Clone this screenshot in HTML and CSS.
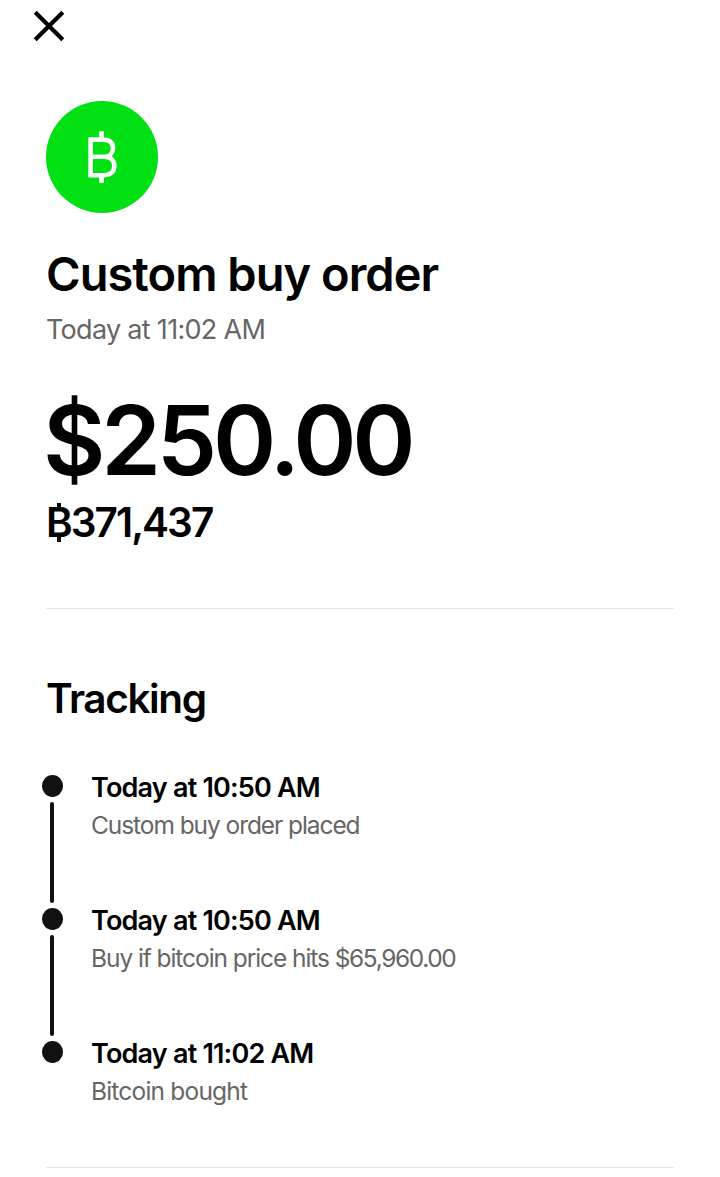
FILE: index.html
```html
<!DOCTYPE html>
<html lang="en">
<head>
    <meta charset="UTF-8">
    <meta name="viewport" content="width=device-width, initial-scale=1.0">
    <title>Custom buy order</title>
    <link rel="stylesheet" href="styles.css">
</head>
<body>
    <header class="topbar">
        <svg class="close" viewBox="0 0 32 32" width="32" height="32">
            <path d="M2.2 2.2L29.8 29.8M29.8 2.2L2.2 29.8" fill="none" stroke="#000" stroke-width="4.2"/>
        </svg>
    </header>
    <main class="order">
        <div class="avatar">
            <svg viewBox="0 0 112 112" width="112" height="112">
                <path d="M44.6 76.6V36.3M44.6 38.6H57.5C64 38.6 67 42.2 67 46.9C67 51.8 64 55.8 58 55.8H44.6M58 55.8C65.2 55.8 68.3 59.8 68.3 65C68.3 70.4 64.8 74.3 57.5 74.3H44.6M55.5 30.2V38.6M55.5 74.3V82" fill="none" stroke="#fff" stroke-width="4.6"/>
            </svg>
        </div>
        <h1 class="title">Custom buy order</h1>
        <p class="date">Today at 11:02 AM</p>
        <p class="amount">$250.00</p>
        <p class="bitcoin"><span class="btc">B</span>371,437</p>
        <hr class="divider">
        <h2 class="heading">Tracking</h2>
        <ol class="steps">
            <li class="step">
                <p class="time">Today at 10:50 AM</p>
                <p class="desc">Custom buy order placed</p>
            </li>
            <li class="step">
                <p class="time">Today at 10:50 AM</p>
                <p class="desc">Buy if bitcoin price hits <span class="price">$65,960.00</span></p>
            </li>
            <li class="step">
                <p class="time">Today at 11:02 AM</p>
                <p class="desc last">Bitcoin bought</p>
            </li>
        </ol>
        <hr class="divider">
    </main>
</body>
</html>
```
FILE: styles.css
```css
* {
    box-sizing: border-box;
    margin: 0;
    padding: 0;
}
body {
    background-color: #fff;
    color: #000;
    font-family: Inter, "Liberation Sans", sans-serif;
}
.topbar {
    height: 101px;
    padding: 10px 33px;
}
.close {
    display: block;
}
.order {
    padding: 0 46px;
}
.avatar {
    width: 112px;
    height: 112px;
    border-radius: 50%;
    background-color: #00e013;
}
.title {
    margin-top: 33px;
    font-size: 47px;
    font-weight: 600;
    line-height: 56px;
    letter-spacing: -0.97px;
}
.date {
    margin-top: 10px;
    color: #666;
    font-size: 27px;
    line-height: 36px;
    letter-spacing: -0.7px;
}
.amount {
    margin: 42px 0 0 -3px;
    font-size: 96px;
    font-weight: 600;
    line-height: 100px;
    letter-spacing: -4.2px;
}
.bitcoin {
    margin-top: 9px;
    font-size: 40.5px;
    font-weight: 600;
    line-height: 48px;
    letter-spacing: -1.95px;
}
/* bitcoin sign: a B with a short stroke above and below */
.btc {
    position: relative;
}
.btc::before,
.btc::after {
    content: "";
    position: absolute;
    left: 11px;
    width: 4px;
    height: 5px;
    background-color: #000;
}
.btc::before {
    top: 5px;
}
.btc::after {
    bottom: 5px;
}
.divider {
    margin-top: 61px;
    border: none;
    border-top: 1px solid #e4e4e4;
}
.heading {
    margin-top: 66px;
    font-size: 40.5px;
    font-weight: 600;
    line-height: 48px;
    letter-spacing: -1.4px;
}
.steps {
    margin-top: 47px;
    list-style: none;
}
.step {
    position: relative;
    height: 133px;
    padding-left: 45px;
}
.step:last-child {
    height: 72px;
}
/* dot and connecting line of the timeline */
.step::before {
    content: "";
    position: absolute;
    top: 5px;
    left: -4px;
    width: 21px;
    height: 21.5px;
    border-radius: 50%;
    background-color: #111;
}
.step:not(:last-child)::after {
    content: "";
    position: absolute;
    top: 32px;
    left: 4px;
    width: 4px;
    height: 101px;
    border-radius: 2px;
    background-color: #111;
}
.time {
    font-size: 27px;
    font-weight: 600;
    line-height: 36px;
    letter-spacing: -0.8px;
}
.desc {
    margin-top: 3px;
    color: #666;
    font-size: 24.5px;
    line-height: 32px;
    letter-spacing: -1.07px;
}
.price {
    letter-spacing: -1.4px;
}
.last {
    letter-spacing: -0.8px;
}
.steps + .divider {
    margin-top: 59px;
}
```
